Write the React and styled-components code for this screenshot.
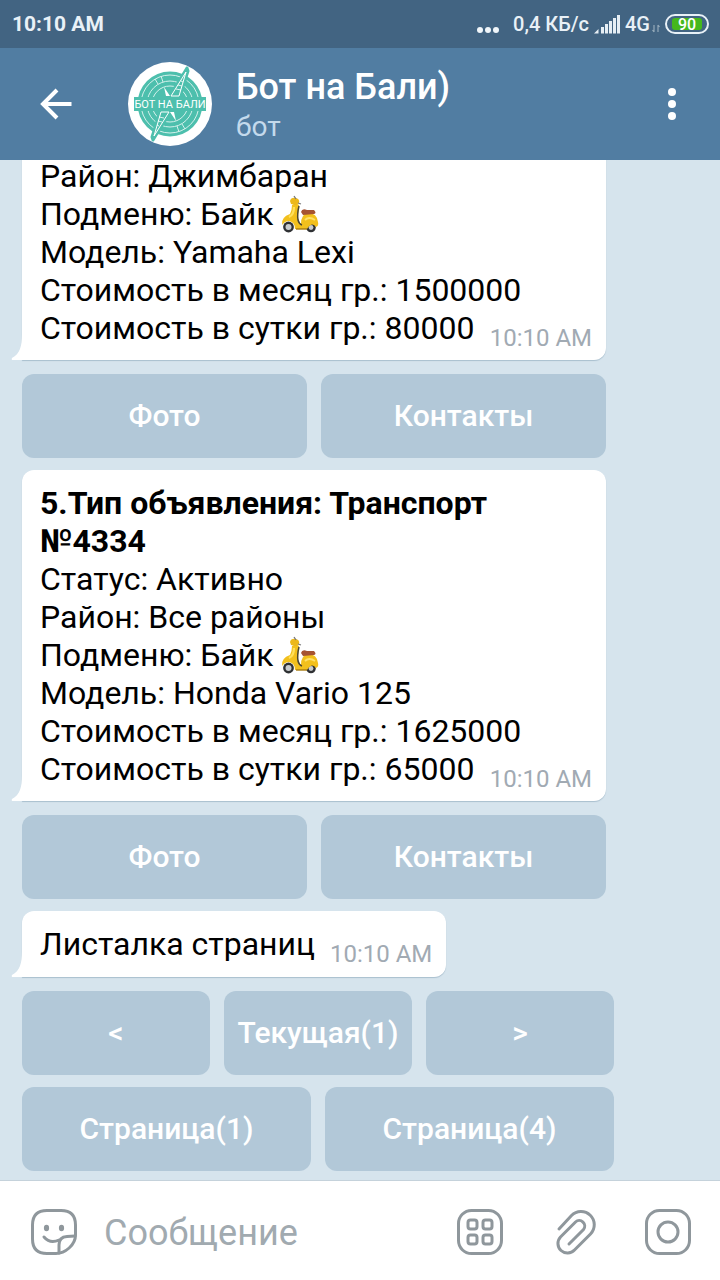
import React from 'react';
import styled, { createGlobalStyle } from 'styled-components';

const TIME = '10:10 AM';

const StatusIcons = () => (
  <StatusGroup>
    <svg width="24" height="24" viewBox="0 0 24 24" fill="#f0f6fa">
      <circle cx="4" cy="18" r="3" />
      <circle cx="12" cy="18" r="3" />
      <circle cx="20" cy="18" r="3" />
    </svg>
    <Speed>0,4 КБ/с</Speed>
    <svg width="26" height="20" viewBox="0 0 26 20" fill="#e6eef4">
      <path d="M0 19.5 L4.5 15 V19.5 Z" />
      <rect x="7" y="13" width="3" height="6.5" />
      <rect x="11" y="10" width="3" height="9.5" />
      <rect x="15" y="7" width="3" height="12.5" />
      <rect x="19" y="4" width="3" height="15.5" />
      <rect x="23" y="1" width="3" height="18.5" />
    </svg>
    <Network>4G</Network>
    <svg width="8" height="20" viewBox="0 0 8 20" fill="none" stroke="#94a9b9" strokeWidth="1.2">
      <path d="M2 11 V18 M0.5 16 L2 18 M6 18 V11 M6 11 L7.5 13" />
    </svg>
    <Battery>
      <span>90</span>
    </Battery>
  </StatusGroup>
);

const BackIcon = () => (
  <svg width="32" height="32" viewBox="0 0 32 32" fill="none" stroke="#fff" strokeWidth="4">
    <path d="M31.5 16 H3 M17 2 L3 16 L17 30" />
  </svg>
);

const AvatarLogo = () => (
  <svg width="84" height="84" viewBox="0 0 84 84" role="img" aria-label="Аватар">
    <circle cx="42" cy="42" r="42" fill="#fff" />
    <circle cx="42" cy="42" r="32.5" fill="#4dbfad" />
    <g fill="none" stroke="#d5f1ec" strokeWidth="1">
      <circle cx="42" cy="42" r="29" />
      <circle cx="42" cy="42" r="23" />
      <circle cx="42" cy="42" r="18" />
      <path d="M27 17 L30 22 M33 14 L35 20 M57 67 L54 62 M51 70 L49 64" />
    </g>
    <path
      d="M59 6 L42 34 H52 L60 9 Z M25 78 L42 50 H32 L24 75 Z"
      fill="#4dbfad"
      stroke="#4dbfad"
      strokeWidth="3"
      strokeLinejoin="round"
    />
    <path
      d="M58 10 L43 34 H51 Z M26 74 L41 50 H33 Z"
      fill="#4dbfad"
      stroke="#fff"
      strokeWidth="1"
      strokeLinejoin="round"
    />
    <path d="M53 19 L55 20 M50 23 L54 24 M48 27 L53 28 M31 64 L29 63 M34 60 L30 59 M36 56 L31 55" stroke="#fff" strokeWidth="0.8" />
    <path d="M36 25 L42 34 H38 Z M48 59 L42 50 H46 Z" fill="#fff" />
    <path d="M6 35 H78 V49 H6 Z" fill="#4dbfad" />
    <text
      x="42"
      y="46"
      textAnchor="middle"
      fontFamily="Roboto, sans-serif"
      fontSize="11"
      fontWeight="400"
      fill="#fff"
    >
      БОТ НА БАЛИ
    </text>
  </svg>
);

const MenuIcon = () => (
  <svg width="8" height="34" viewBox="0 0 8 34" fill="#fff">
    <circle cx="4" cy="5" r="4" />
    <circle cx="4" cy="17" r="4" />
    <circle cx="4" cy="29" r="4" />
  </svg>
);

const Scooter = () => (
  <ScooterSvg viewBox="0 0 38 38" role="img" aria-label="скутер">
    <circle cx="7.5" cy="32" r="5.4" fill="#2f3134" />
    <circle cx="7.5" cy="32" r="3" fill="#c8cbcd" />
    <circle cx="30" cy="32.5" r="4.8" fill="#2f3134" />
    <circle cx="30" cy="32.5" r="2.4" fill="#c8cbcd" />
    <path
      d="M11 10 Q15 7 18 10 L17 22 Q17 27 20 29 Q20 19 27 18 Q36 18 37 27 Q38 31 35 32 Q31 26 26 34 L14 34 Q14 27 8 26 Q4 26 1 30 Q0 22 9 19 Q11 15 11 10 Z"
      fill="#f2c01d"
    />
    <path d="M13 12 Q13 20 8 22" fill="none" stroke="#ffe05a" strokeWidth="2.2" />
    <path d="M18 11 Q16 19 17 25 Q18 29 21 30" fill="none" stroke="#4a4633" strokeWidth="1.5" />
    <path d="M15 34 L26 34" stroke="#a87c10" strokeWidth="1.4" />
    <path d="M20 17 Q21 13 26 15 L33 15 Q36 18 33 19 L22 20 Z" fill="#a65331" />
    <path d="M9 6 Q10 2 15 3 Q19 4 18 8 L15 10 L10 9 Z" fill="#ecb81a" />
    <path d="M15 4 L13 1 M17 8 L20 9" fill="none" stroke="#777" strokeWidth="1.3" />
    <path d="M24 25 Q28 21 34 25" fill="none" stroke="#ffe16a" strokeWidth="1.8" />
  </ScooterSvg>
);

const Tail = () => (
  <TailSvg viewBox="0 0 12 26">
    <path d="M12 0 H11 C11 12 9 20 1 24 Q0 26 2 26 H12 Z" fill="#fff" />
  </TailSvg>
);

const StickerIcon = () => (
  <ToolSvg viewBox="0 0 46 46">
    <path d="M44.5 26 V16 Q44.5 1.5 30 1.5 H16 Q1.5 1.5 1.5 16 V30 Q1.5 44.5 16 44.5 H25 C34 44.5 44.5 36 44.5 26 Z" />
    <path d="M13 28 Q19 35 28 31 M28 44 V36 Q28 28 36 27.5 L44 27" />
    <ellipse cx="15.5" cy="19" rx="2.6" ry="3.2" fill="#8f979c" stroke="none" />
    <ellipse cx="30.5" cy="19" rx="2.6" ry="3.2" fill="#8f979c" stroke="none" />
  </ToolSvg>
);

const CommandsIcon = () => (
  <ToolSvg viewBox="0 0 46 46">
    <rect x="1.5" y="1.5" width="43" height="43" rx="13" />
    <rect x="11" y="11" width="9" height="9" rx="2.5" />
    <rect x="26" y="11" width="9" height="9" rx="2.5" />
    <rect x="11" y="26" width="9" height="9" rx="2.5" />
    <rect x="26" y="26" width="9" height="9" rx="2.5" />
  </ToolSvg>
);

const ClipIcon = () => (
  <ToolSvg viewBox="0 0 46 46">
    <path d="M8 20 L20.5 6.5 A13 13 0 0 1 39.5 25 L23.5 41 A9.5 9.5 0 0 1 9.5 28 L24.5 13 A5.5 5.5 0 0 1 32.5 20.5 L18 35" />
  </ToolSvg>
);

const CameraIcon = () => (
  <ToolSvg viewBox="0 0 46 46">
    <rect x="1.5" y="1.5" width="43" height="43" rx="13" />
    <circle cx="23" cy="23" r="10" />
  </ToolSvg>
);

/**
 * One incoming message, the time sits next to the last line
 */
const Message = ({ title, lines, last, clipped }) => (
  <Bubble $clipped={clipped}>
    {title && <Title>{title}</Title>}
    {lines.map((line) => (
      <Line key={line}>
        {line}
        {line.startsWith('Подменю') && <Scooter />}
      </Line>
    ))}
    <LastRow>
      <LastLine>{last}</LastLine>
      <Time>{TIME}</Time>
    </LastRow>
    <Tail />
  </Bubble>
);

const Keyboard = ({ rows }) => (
  <Keys>
    {rows.map((row) => (
      <KeyRow key={row.join()}>
        {row.map((label) => (
          <Key key={label} type="button">{label}</Key>
        ))}
      </KeyRow>
    ))}
  </Keys>
);

const App = () => (
  <Screen>
    <GlobalStyle />
    <StatusBar>
      <Clock>{TIME}</Clock>
      <StatusIcons />
    </StatusBar>

    <Header>
      <IconButton type="button" aria-label="Назад"><BackIcon /></IconButton>
      <Avatar><AvatarLogo /></Avatar>
      <HeaderText>
        <ChatName>Бот на Бали)</ChatName>
        <ChatKind>бот</ChatKind>
      </HeaderText>
      <IconButton type="button" aria-label="Меню"><MenuIcon /></IconButton>
    </Header>

    <Chat>
      <Group>
        <Message
          clipped
          lines={[
            'Район: Джимбаран',
            'Подменю: Байк',
            'Модель: Yamaha Lexi',
            'Стоимость в месяц гр.: 1500000',
          ]}
          last="Стоимость в сутки гр.: 80000"
        />
        <Keyboard rows={[['Фото', 'Контакты']]} />
      </Group>

      <Group>
        <Message
          title="5.Тип объявления: Транспорт №4334"
          lines={[
            'Статус: Активно',
            'Район: Все районы',
            'Подменю: Байк',
            'Модель: Honda Vario 125',
            'Стоимость в месяц гр.: 1625000',
          ]}
          last="Стоимость в сутки гр.: 65000"
        />
        <Keyboard rows={[['Фото', 'Контакты']]} />
      </Group>

      <Group $wide>
        <Message lines={[]} last="Листалка страниц" />
        <Keyboard rows={[['<', 'Текущая(1)', '>'], ['Страница(1)', 'Страница(4)']]} />
      </Group>
    </Chat>

    <Composer>
      <IconButton type="button" aria-label="Стикеры"><StickerIcon /></IconButton>
      <MessageInput type="text" placeholder="Сообщение" aria-label="Сообщение" />
      <Tools>
        <IconButton type="button" aria-label="Команды"><CommandsIcon /></IconButton>
        <IconButton type="button" aria-label="Прикрепить"><ClipIcon /></IconButton>
        <IconButton type="button" aria-label="Камера"><CameraIcon /></IconButton>
      </Tools>
    </Composer>
  </Screen>
);

export default App;

const GlobalStyle = createGlobalStyle`
  * {
    box-sizing: border-box;
  }
  body {
    margin: 0;
    font-family: Roboto, sans-serif;
  }
`;

const Screen = styled.div`
  display: flex;
  flex-direction: column;
  height: 100vh;
  background: #d6e4ed;
`;

const StatusBar = styled.div`
  display: flex;
  flex: none;
  align-items: center;
  justify-content: space-between;
  height: 48px;
  padding: 0 11px 0 12px;
  background: #426482;
  color: #e9f1f7;
  font-size: 20px;
  font-weight: 500;
`;

const Clock = styled.time`
  font-size: 21px;
  font-weight: 700;
`;

const StatusGroup = styled.div`
  display: flex;
  align-items: center;
`;

const Speed = styled.span`
  margin: 0 5px 0 13px;
`;

const Network = styled.span`
  margin: 0 2px 0 5px;
`;

const Battery = styled.div`
  display: flex;
  width: 44px;
  height: 20px;
  margin-left: 5px;
  padding: 2px 5px;
  border: 2px solid #e9f1f7;
  border-radius: 10px;

  span {
    flex: 1;
    border-radius: 3px;
    background: #45b81c;
    color: #fff;
    font-size: 16px;
    line-height: 13px;
    text-align: center;
  }
`;

const Header = styled.header`
  display: flex;
  flex: none;
  align-items: center;
  height: 112px;
  padding: 0 44px 0 40px;
  background: #517da2;
`;

const IconButton = styled.button`
  display: flex;
  flex: none;
  padding: 0;
  border: 0;
  background: none;
`;

const Avatar = styled.div`
  display: flex;
  margin: 0 24px 0 56px;
`;

const HeaderText = styled.div`
  flex: 1;
  padding-top: 6px;
`;

const ChatName = styled.h1`
  margin: 0;
  color: #fff;
  font-size: 36px;
  font-weight: 500;
  line-height: 40px;
`;

const ChatKind = styled.div`
  color: #c4daec;
  font-size: 28px;
  line-height: 40px;
`;

const Chat = styled.main`
  display: flex;
  flex: 1;
  flex-direction: column;
  justify-content: flex-end;
  gap: 12px;
  min-height: 0;
  padding: 0 22px 9px;
  overflow: hidden;
`;

const Group = styled.section`
  flex: none;
  width: calc(100% - ${({ $wide }) => ($wide ? '84px' : '92px')});
`;

const Bubble = styled.div`
  position: relative;
  width: fit-content;
  min-width: ${({ $clipped }) => ($clipped ? '100%' : '0')};
  max-width: 100%;
  min-height: 66px;
  padding: 14px 14px 8px 18px;
  border-radius: ${({ $clipped }) => ($clipped ? '0 0 12px 0' : '12px 12px 12px 0')};
  background: #fff;
  box-shadow: 0 1px 1px #a9bfce;
  color: #000;
  font-size: 32px;
  line-height: 38px;
`;

const Title = styled.div`
  font-weight: 700;
`;

const Line = styled.div``;

const LastRow = styled.div`
  display: flex;
  align-items: flex-end;
  justify-content: space-between;
  gap: 15px;
`;

const LastLine = styled.div`
  padding-bottom: 5px;
`;

const Time = styled.time`
  flex: none;
  color: #a1aab3;
  font-size: 24px;
  line-height: 28px;
`;

const ScooterSvg = styled.svg`
  width: 38px;
  height: 38px;
  margin-left: 7px;
  vertical-align: top;
`;

const TailSvg = styled.svg`
  position: absolute;
  bottom: 0;
  left: -11px;
  width: 12px;
  height: 26px;
`;

const Keys = styled.div`
  display: flex;
  flex-direction: column;
  gap: 12px;
  margin-top: 14px;
`;

const KeyRow = styled.div`
  display: flex;
  gap: 14px;
`;

const Key = styled.button`
  flex: 1 1 0;
  min-width: 0;
  height: 84px;
  padding: 0 0 2px;
  border: 0;
  border-radius: 12px;
  background: #b2c8d8;
  color: #fff;
  font-family: inherit;
  font-size: 30px;
  font-weight: 500;
`;

const Composer = styled.footer`
  display: flex;
  flex: none;
  align-items: center;
  height: 100px;
  padding: 2px 29px 0 31px;
  border-top: 1px solid #c5d2db;
  background: #fff;
`;

const MessageInput = styled.input`
  flex: 1;
  min-width: 0;
  margin: 0 28px 0 27px;
  padding: 2px 0 0;
  border: 0;
  outline: 0;
  background: none;
  color: #000;
  font-family: inherit;
  font-size: 36px;

  &::placeholder {
    color: #a1aab0;
    opacity: 1;
  }
`;

const Tools = styled.div`
  display: flex;
  gap: 48px;
`;

const ToolSvg = styled.svg`
  width: 46px;
  height: 46px;
  fill: none;
  stroke: #8f979c;
  stroke-width: 3;
  stroke-linecap: round;
`;
